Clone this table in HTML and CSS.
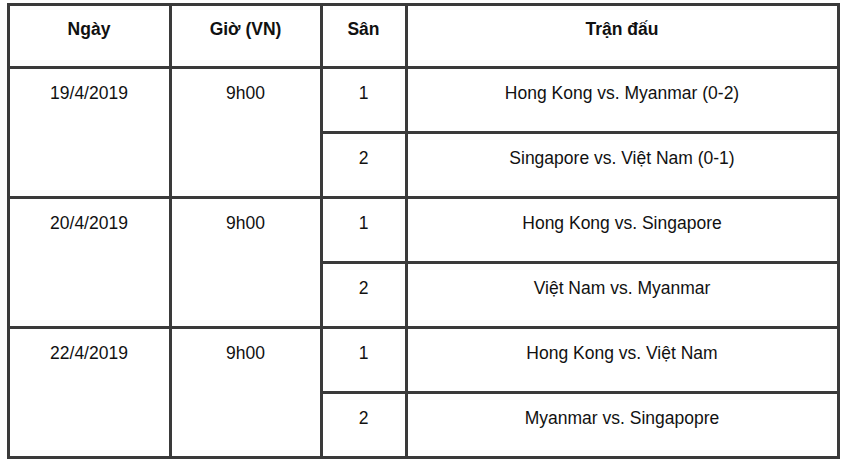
FILE: index.html
```html
<!DOCTYPE html>
<html lang="vi">
<head>
<meta charset="utf-8">
<title>Lịch thi đấu</title>
<link rel="stylesheet" href="styles.css">
</head>
<body>
<table class="schedule">
  <colgroup>
    <col class="c-date">
    <col class="c-time">
    <col class="c-field">
    <col class="c-match">
  </colgroup>
  <thead>
    <tr>
      <th>Ngày</th>
      <th>Giờ (VN)</th>
      <th>Sân</th>
      <th>Trận đấu</th>
    </tr>
  </thead>
  <tbody>
    <tr>
      <td rowspan="2">19/4/2019</td>
      <td rowspan="2">9h00</td>
      <td>1</td>
      <td>Hong Kong vs. Myanmar (0-2)</td>
    </tr>
    <tr>
      <td>2</td>
      <td>Singapore vs. Việt Nam (0-1)</td>
    </tr>
    <tr>
      <td rowspan="2">20/4/2019</td>
      <td rowspan="2">9h00</td>
      <td>1</td>
      <td>Hong Kong vs. Singapore</td>
    </tr>
    <tr>
      <td>2</td>
      <td>Việt Nam vs. Myanmar</td>
    </tr>
    <tr>
      <td rowspan="2">22/4/2019</td>
      <td rowspan="2">9h00</td>
      <td>1</td>
      <td>Hong Kong vs. Việt Nam</td>
    </tr>
    <tr>
      <td>2</td>
      <td>Myanmar vs. Singapopre</td>
    </tr>
  </tbody>
</table>
</body>
</html>
```

FILE: styles.css
```css
html, body {
  margin: 0;
  padding: 0;
  background: #ffffff;
}

body {
  padding: 3px 0 0 6.5px;
  font-family: "Liberation Sans", Arial, sans-serif;
  font-size: 17.5px;
  color: #111111;
}

.schedule {
  border-collapse: collapse;
  table-layout: fixed;
  width: 830px;
  border: 3px solid #3a3a3a;
}

.c-date { width: 162px; }
.c-time { width: 151px; }
.c-field { width: 85px; }
.c-match { width: 432px; }

.schedule th,
.schedule td {
  border: 3px solid #3a3a3a;
  text-align: center;
  vertical-align: top;
  line-height: 20px;
  padding: 14px 4px 28px;
}

.schedule th {
  font-weight: bold;
  padding-top: 13px;
  padding-bottom: 27px;
}
```
